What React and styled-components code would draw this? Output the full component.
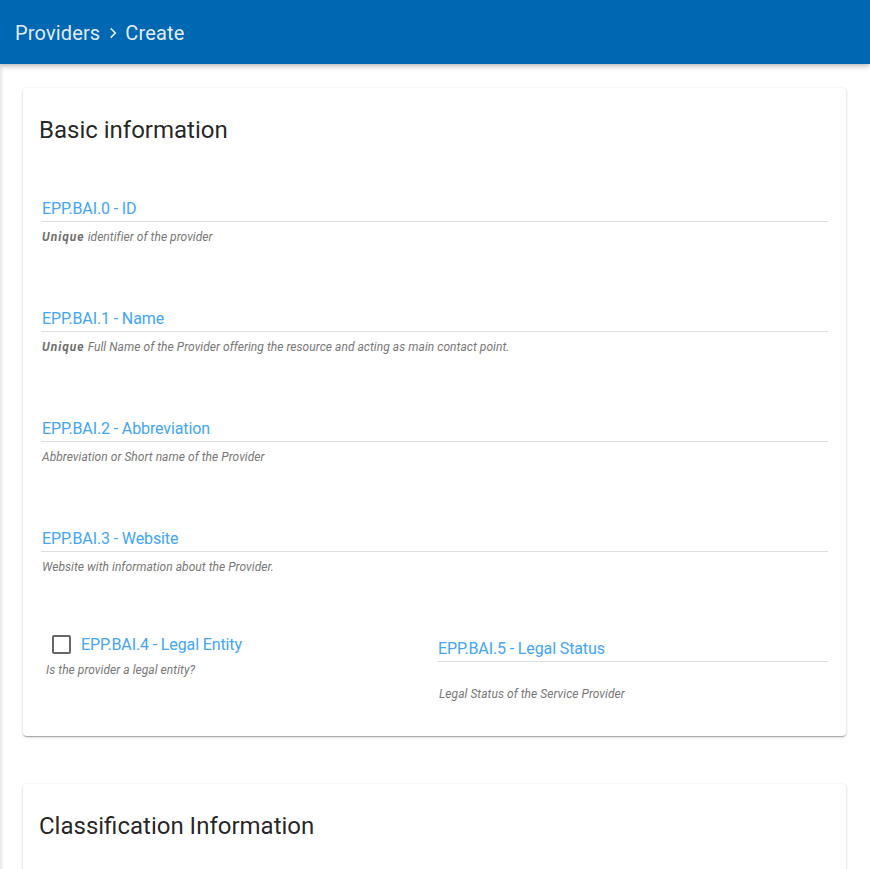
import React from "react";
import styled, { createGlobalStyle } from "styled-components";

const Global = createGlobalStyle`
  html, body { margin: 0; padding: 0; background: #fff; }
  body { font-family: Roboto, "Noto Sans", Arial, sans-serif; overflow: hidden; }
  * { box-sizing: border-box; }
`;

const AppBar = styled.header`
  height: 64px;
  background: #0067b3;
  display: flex;
  align-items: center;
  padding: 0 15px;
  box-shadow: 0 2px 4px -1px rgba(0,0,0,0.2), 0 4px 5px 0 rgba(0,0,0,0.1);
  position: relative;
  z-index: 2;
`;

const Crumbs = styled.div`
  display: flex;
  align-items: center;
  font-size: 20px;
  color: rgba(255,255,255,0.9);
  letter-spacing: 0.15px;
  padding-top: 2px;
`;

const Sep = styled.svg`
  width: 14px;
  height: 14px;
  margin: 0 5px 0 6px;
`;

const Main = styled.main`
  min-height: 805px;
  padding: 24px 24px 24px 23px;
  box-shadow: inset 4px 0 4px -3px rgba(0,0,0,0.14);
  display: flex;
  flex-direction: column;
  gap: 48px;
`;

const Card = styled.section`
  background: #fff;
  border-radius: 4px;
  box-shadow: 0 1px 3px 0 rgba(0,0,0,0.2), 0 1px 1px 0 rgba(0,0,0,0.14), 0 2px 1px -1px rgba(0,0,0,0.12);
  padding: 24px 18px 34px 16px;
`;

const Title = styled.h2`
  margin: 0;
  font-size: 24px;
  line-height: 36px;
  font-weight: 400;
  color: rgba(0,0,0,0.87);
`;

const Fields = styled.div`
  margin: 51px 0 0 2px;
  display: flex;
  flex-direction: column;
  gap: 64px;
`;

const Field = styled.div`
  display: flex;
  flex-direction: column;
`;

const Input = styled.div`
  font-size: 16px;
  line-height: 20px;
  letter-spacing: -0.12px;
  color: #42a5f5;
  padding: 0 0 2px 1px;
  border-bottom: 1px solid #dedede;
`;

const Help = styled.div`
  margin-top: ${p => p.$gap || 7}px;
  margin-left: ${p => p.$indent || 1}px;
  font-size: 12px;
  line-height: 16px;
  font-style: italic;
  letter-spacing: 0.05px;
  color: #777;
  b { font-weight: 700; color: #6f6f6f; letter-spacing: 1px; }
`;

const Row = styled.div`
  display: grid;
  grid-template-columns: 396px 1fr;
  margin-top: -8px;
`;

const CheckRow = styled.label`
  display: flex;
  align-items: center;
  height: 27px;
  padding-left: 11px;
`;

const Box = styled.span`
  width: 19px;
  height: 19px;
  border: 2px solid #666;
  border-radius: 2px;
  flex: none;
`;

const CheckLabel = styled.span`
  margin-left: 10px;
  font-size: 16px;
  letter-spacing: -0.12px;
  color: #42a5f5;
`;

const RightField = styled.div`
  padding-top: 8px;
  display: flex;
  flex-direction: column;
`;

export default function App() {
  return (
    <>
      <Global />
      <AppBar>
        <Crumbs>
          Providers
          <Sep viewBox="0 0 24 24" fill="none" stroke="currentColor" strokeWidth="2.6" strokeLinecap="square">
            <path d="M9 5l7 7-7 7" />
          </Sep>
          Create
        </Crumbs>
      </AppBar>
      <Main>
        <Card>
          <Title>Basic information</Title>
          <Fields>
            <Field>
              <Input>EPP.BAI.0 - ID</Input>
              <Help><b>Unique</b> identifier of the provider</Help>
            </Field>
            <Field>
              <Input>EPP.BAI.1 - Name</Input>
              <Help><b>Unique</b> Full Name of the Provider offering the resource and acting as main contact point.</Help>
            </Field>
            <Field>
              <Input>EPP.BAI.2 - Abbreviation</Input>
              <Help>Abbreviation or Short name of the Provider</Help>
            </Field>
            <Field>
              <Input>EPP.BAI.3 - Website</Input>
              <Help>Website with information about the Provider.</Help>
            </Field>
            <Row>
              <Field>
                <CheckRow>
                  <Box />
                  <CheckLabel>EPP.BAI.4 - Legal Entity</CheckLabel>
                </CheckRow>
                <Help $gap={4} $indent={5}>Is the provider a legal entity?</Help>
              </Field>
              <RightField>
                <Input>EPP.BAI.5 - Legal Status</Input>
                <Help $gap={24} $indent={2}>Legal Status of the Service Provider</Help>
              </RightField>
            </Row>
          </Fields>
        </Card>
        <Card>
          <Title>Classification Information</Title>
          <Fields>
            <Field>
              <Input>EPP.CLI.1 - Scientific Domain</Input>
              <Help>The branch of science, scientific discipline that is related to the Provider.</Help>
            </Field>
          </Fields>
        </Card>
      </Main>
    </>
  );
}
